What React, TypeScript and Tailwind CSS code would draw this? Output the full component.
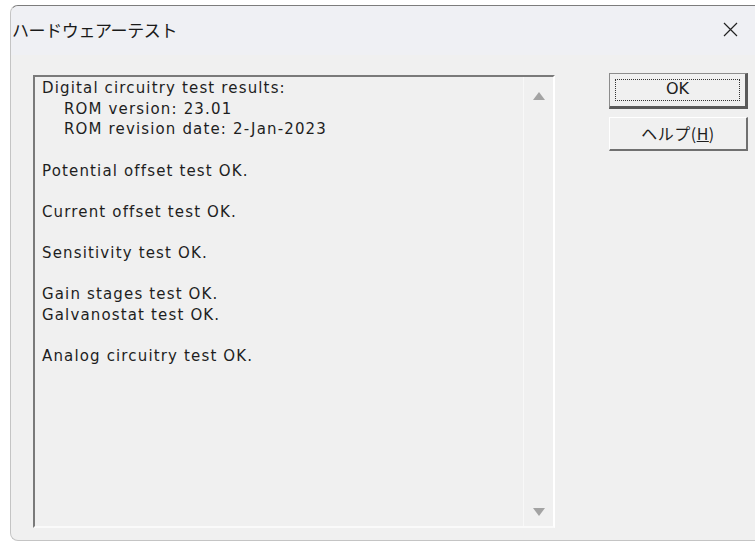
import { ReactNode } from "react";

const lines: { text: string; indent?: boolean }[] = [
  { text: "Digital circuitry test results:" },
  { text: "ROM version: 23.01", indent: true },
  { text: "ROM revision date: 2-Jan-2023", indent: true },
  { text: "" },
  { text: "Potential offset test OK." },
  { text: "" },
  { text: "Current offset test OK." },
  { text: "" },
  { text: "Sensitivity test OK." },
  { text: "" },
  { text: "Gain stages test OK." },
  { text: "Galvanostat test OK." },
  { text: "" },
  { text: "Analog circuitry test OK." },
];

const Arrow = ({ down }: { down?: boolean }) => (
  <svg width="12" height="8" viewBox="0 0 12 8">
    <path d={down ? "M0 0 L12 0 L6 8 Z" : "M6 0 L12 8 L0 8 Z"} fill="#a3a3a3" />
  </svg>
);

const Button = ({ children, primary }: { children: ReactNode; primary?: boolean }) => (
  <button
    className={
      primary
        ? "h-[36px] w-[139px] border-t border-l border-[#8c8c8c] border-r-[3px] border-b-[3px] border-r-[#5a5a5a] border-b-[#5a5a5a] bg-[#f0f0f0] p-[5px]"
        : "h-[34px] w-[139px] border-t border-l border-white border-r-2 border-b-2 border-r-[#707070] border-b-[#707070] bg-[#f0f0f0]"
    }
  >
    {primary ? (
      <div className="flex h-full items-center justify-center border border-dotted border-[#333] pb-[3px] leading-[16px]">
        {children}
      </div>
    ) : (
      children
    )}
  </button>
);

export default function App() {
  return (
    <div className="h-[544px] w-[755px] overflow-hidden bg-white pl-[10px] pt-[5px] font-['DejaVu_Sans','Noto_Sans_CJK_JP',sans-serif] text-[#1e1e1e]">
      <div className="flex h-[536px] flex-col rounded-l-[8px] border-t border-l border-b border-t-[#7c7c7c] border-l-[#c4c4c4] border-b-[#c4c4c4] bg-[#f0f0f0]">
        {/* title bar */}
        <div className="flex h-[49px] shrink-0 items-center justify-between rounded-tl-[8px] bg-[#eff0f4] pb-[2px] pl-[1px] pr-[17px]">
          <span className="font-['Noto_Sans_CJK_JP',sans-serif] text-[17px] tracking-[-0.4px] text-[#1a1a1a]">
            ハードウェアーテスト
          </span>
          <svg width="15" height="15" viewBox="0 0 15 15">
            <path d="M1 1 L14 14 M14 1 L1 14" stroke="#222" strokeWidth="1.2" />
          </svg>
        </div>

        <div className="flex flex-1 pl-[22px] pt-[20px]">
          {/* results box */}
          <div className="flex h-[453px] w-[522px] border-t-2 border-l-2 border-t-[#7a7a7a] border-l-[#7a7a7a] border-r-2 border-b-2 border-r-white border-b-[#fafafa]">
            <div className="flex-1 pl-[7px] pt-[1px] text-[15px] leading-[20.65px] tracking-[1.15px]">
              {lines.map((l, i) => (
                <div key={i} className={l.indent ? "h-[20.65px] pl-[22px]" : "h-[20.65px]"}>
                  {l.text}
                </div>
              ))}
            </div>
            <div className="flex w-[30px] flex-col items-center justify-between border-l border-[#f8f8f8] pb-[10px] pt-[15px]">
              <Arrow />
              <Arrow down />
            </div>
          </div>

          {/* buttons */}
          <div className="ml-[54px] flex flex-col gap-[8px] text-[16px]">
            <div className="-mt-[2px]">
              <Button primary>OK</Button>
            </div>
            <Button>
              <span className="font-['Noto_Sans_CJK_JP',sans-serif] tracking-[0.5px]">
                ヘルプ(<span className="underline">H</span>)
              </span>
            </Button>
          </div>
        </div>
      </div>
    </div>
  );
}
